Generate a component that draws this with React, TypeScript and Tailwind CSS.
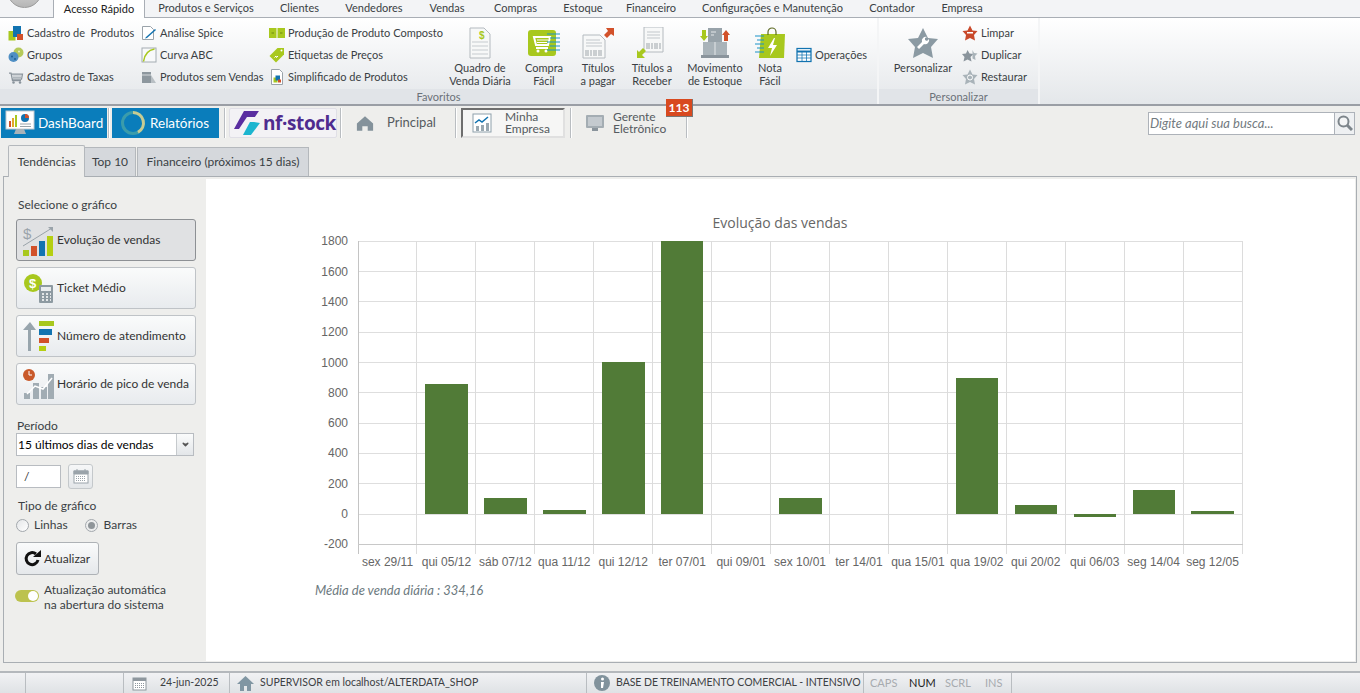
import type { ReactNode } from 'react';
import { ChevronDown } from 'lucide-react';

const menuItems: [string, number][] = [
  ['Produtos e Serviços', 122],
  ['Clientes', 65],
  ['Vendedores', 84],
  ['Vendas', 62],
  ['Compras', 75],
  ['Estoque', 60],
  ['Financeiro', 76],
  ['Configurações e Manutenção', 167],
  ['Contador', 72],
  ['Empresa', 68],
];

const bars = [
  { x: 425, w: 43, value: 858 },
  { x: 484, w: 43, value: 105 },
  { x: 543, w: 43, value: 25 },
  { x: 602, w: 43, value: 1005 },
  { x: 661, w: 42, value: 1800 },
  { x: 779, w: 43, value: 105 },
  { x: 956, w: 42, value: 900 },
  { x: 1015, w: 42, value: 60 },
  { x: 1074, w: 42, value: -20 },
  { x: 1133, w: 42, value: 160 },
  { x: 1191, w: 43, value: 20 },
];

const days = [
  'sex 29/11', 'qui 05/12', 'sáb 07/12', 'qua 11/12', 'qui 12/12',
  'ter 07/01', 'qui 09/01', 'sex 10/01', 'ter 14/01', 'qua 15/01',
  'qua 19/02', 'qui 20/02', 'qui 06/03', 'seg 14/04', 'seg 12/05',
];

const ticks = [1800, 1600, 1400, 1200, 1000, 800, 600, 400, 200, 0, -200];

const yOf = (v: number) => 514 - v * 0.1515;
const xOf = (i: number) => 358 + i * 58.93;

function Ico({ size = 16, children }: { size?: number; children: ReactNode }) {
  return (
    <svg width={size} height={size} viewBox="0 0 32 32" className="shrink-0">
      {children}
    </svg>
  );
}

const IconBoxes = () => (
  <Ico>
    <rect x="1" y="12" width="14" height="19" fill="#a8c81e" />
    <rect x="10" y="2" width="16" height="22" fill="#1273b0" />
    <rect x="18" y="18" width="12" height="12" fill="#d2512a" />
  </Ico>
);
const IconGroups = () => (
  <Ico>
    <circle cx="21" cy="11" r="10" fill="#b5c95a" />
    <circle cx="11" cy="20" r="10" fill="#4f8fc4" />
    <circle cx="8" cy="19" r="2" fill="#1d5f96" />
    <circle cx="14" cy="24" r="2" fill="#1d5f96" />
    <circle cx="22" cy="9" r="2" fill="#e8efc4" />
  </Ico>
);
const IconCart = () => (
  <Ico>
    <path d="M2 8h4l3 15h17M7 10h22l-2 10H9" fill="none" stroke="#8a949c" strokeWidth="2.5" />
    <path d="M9 14h18M9 17h18" stroke="#aeb6bc" strokeWidth="2" />
    <circle cx="11" cy="27" r="2.5" fill="#8a949c" />
    <circle cx="24" cy="27" r="2.5" fill="#8a949c" />
  </Ico>
);
const IconSpice = () => (
  <Ico>
    <path d="M3 3h16l6 6v20H3z" fill="#fff" stroke="#9aa3aa" strokeWidth="2" />
    <path d="M10 24l18-16 2 2-18 16-4 1z" fill="#1273b0" />
  </Ico>
);
const IconCurve = () => (
  <Ico>
    <rect x="2" y="2" width="28" height="28" fill="#f8f9fa" stroke="#a4acb2" strokeWidth="2" />
    <path d="M5 29C7 15 14 6 27 4" fill="none" stroke="#a8c81e" strokeWidth="3" />
  </Ico>
);
const IconNoSales = () => (
  <Ico>
    <path d="M2 6h18v22H2z" fill="#8d979e" />
    <path d="M2 12h18" stroke="#d5d9dc" strokeWidth="2" />
    <path d="M20 12l10 16H20z" fill="#b8bfc4" />
  </Ico>
);
const IconComposite = () => (
  <Ico>
    <rect x="0" y="6" width="15" height="10" fill="#a8c81e" />
    <rect x="17" y="6" width="15" height="10" fill="#a8c81e" />
    <rect x="0" y="16" width="15" height="10" fill="#a8c81e" />
    <rect x="17" y="16" width="15" height="10" fill="#a8c81e" />
    <path d="M5 16h5M22 16h5" stroke="#6f8a10" strokeWidth="2" />
  </Ico>
);
const IconTag = () => (
  <Ico>
    <path d="M1 18L17 2h13v13L14 31z" fill="#a8c81e" />
    <circle cx="25" cy="7" r="2" fill="#fff" />
    <path d="M11 21l3-3 1 3 3-3" fill="none" stroke="#fff" strokeWidth="2" />
  </Ico>
);
const IconSimple = () => (
  <Ico>
    <path d="M5 1h16l6 6v24H5z" fill="#fff" stroke="#9aa3aa" strokeWidth="2" />
    <rect x="9" y="17" width="8" height="10" fill="#a8c81e" />
    <rect x="13" y="13" width="9" height="10" fill="#1273b0" />
    <rect x="18" y="21" width="6" height="6" fill="#d2512a" />
  </Ico>
);
const IconSheet = () => (
  <Ico>
    <rect x="2" y="3" width="28" height="26" fill="#fff" stroke="#1273b0" strokeWidth="2.5" />
    <path d="M2 9h28" stroke="#1273b0" strokeWidth="4" />
    <path d="M2 16h28M2 22h28M12 9v20M21 9v20" stroke="#1273b0" strokeWidth="1.5" />
  </Ico>
);

const docLines = 'M8 15h16M8 19h16M8 23h16M8 27h16';

const BigQuadro = () => (
  <Ico size={32}>
    <path d="M6 1h14l6 6v24H6z" fill="#f7f8f8" stroke="#b4babf" strokeWidth="1" />
    <path d={docLines} stroke="#c6cbcf" strokeWidth="1" />
    <text x="15" y="12" fontSize="10" fontWeight="700" fill="#a8c81e" fontFamily="Liberation Sans, sans-serif">$</text>
  </Ico>
);
const BigCompra = () => (
  <Ico size={32}>
    <rect x="0" y="3" width="28" height="26" rx="3" fill="#a8c81e" />
    <path d="M6 10h16l-2 8H8zM8 21h12" fill="none" stroke="#fff" strokeWidth="2" />
    <path d="M9 13h11M9 15.5h10" stroke="#fff" strokeWidth="1" />
    <circle cx="10" cy="24" r="1.5" fill="#fff" />
    <circle cx="18" cy="24" r="1.5" fill="#fff" />
    <path d="M19 7h13M22 11h10M19 15h13M22 19h10M19 23h13" stroke="#1a93c8" strokeWidth="1" />
  </Ico>
);
const BigPagar = () => (
  <Ico size={32}>
    <path d="M1 8h17l5 5v18H1z" fill="#f7f8f8" stroke="#b4babf" strokeWidth="1" />
    <path d="M4 13h14M4 16h16M4 19h16" stroke="#c2c7cb" strokeWidth="1" />
    <path d="M4 23v6M6 23v6M9 23v6M12 23v6M14 23v6M17 23v6M19 23v6" stroke="#9ea5aa" strokeWidth="1" />
    <path d="M24 1h8v8l-3-2-4 4-3-3 4-4z" fill="#d2512a" />
  </Ico>
);
const BigReceber = () => (
  <Ico size={32}>
    <path d="M8 0h19v25H8z" fill="#f7f8f8" stroke="#b4babf" strokeWidth="1" />
    <path d="M11 5h13M11 8h13M11 11h13" stroke="#c2c7cb" strokeWidth="1" />
    <path d="M11 16v6M13 16v6M16 16v6M19 16v6M21 16v6M24 16v6" stroke="#9ea5aa" strokeWidth="1" />
    <path d="M1 31v-8l2 2 4-4 3 3-4 4 3 3z" fill="#a8c81e" />
  </Ico>
);
const BigMovimento = () => (
  <Ico size={32}>
    <rect x="9" y="1" width="14" height="14" fill="#98a3aa" />
    <rect x="4" y="15" width="24" height="14" fill="#a9b3b9" />
    <path d="M16 15v14M12 5h5M12 8h3" stroke="#e4e7e9" strokeWidth="1" />
    <rect x="2" y="28" width="28" height="3" fill="#8a949c" />
    <path d="M3 3h4v6h2l-4 5-4-5h2z" fill="#a8c81e" />
    <path d="M25 14V8h-2l4-5 4 5h-2v6z" fill="#d2512a" />
  </Ico>
);
const BigNota = () => (
  <Ico size={32}>
    <path d="M7 7h24l-1 24H5z" fill="#a8c81e" />
    <path d="M14 8V5a4 4 0 018 0v3" fill="none" stroke="#5d6a22" strokeWidth="1.2" />
    <path d="M20 11l-6 10h4l-2 8 7-11h-4l2-7z" fill="#fff" />
    <path d="M1 9h9M3 13h7M1 17h9M3 21h7M1 25h9" stroke="#1a93c8" strokeWidth="1" />
  </Ico>
);
const BigStar = () => (
  <Ico size={32}>
    <path d="M16 1l5 10 10 1-7 8 2 11-10-5-10 5 2-11-7-8 10-1z" fill="#8b9aa3" />
    <path d="M20 10a4 4 0 00-5 5l-5 5 2 2 5-5a4 4 0 005-5l-2 2-2-1 0-2z" fill="#fff" />
  </Ico>
);
const StarRed = () => (
  <Ico>
    <path d="M16 1l5 10 10 1-7 8 2 11-10-5-10 5 2-11-7-8 10-1z" fill="#c9492a" />
    <rect x="10" y="14" width="12" height="3" fill="#fff" />
  </Ico>
);
const StarDup = () => (
  <Ico>
    <path d="M11 6l4 7 8 1-6 6 2 9-8-4-8 4 2-9-5-6 8-1z" fill="#8a949c" />
    <path d="M21 6l3 6 7 1-5 5 1 8-6-3z" fill="#a9b3b9" />
  </Ico>
);
const StarRestore = () => (
  <Ico>
    <path d="M16 1l5 10 10 1-7 8 2 11-10-5-10 5 2-11-7-8 10-1z" fill="#a9b3b9" />
    <circle cx="16" cy="17" r="5" fill="none" stroke="#fff" strokeWidth="2" />
  </Ico>
);

const smallColumns: { width: number; items: [ReactNode, string][] }[] = [
  {
    width: 133,
    items: [
      [<IconBoxes />, 'Cadastro de\u00a0 Produtos'],
      [<IconGroups />, 'Grupos'],
      [<IconCart />, 'Cadastro de Taxas'],
    ],
  },
  {
    width: 128,
    items: [
      [<IconSpice />, 'Análise Spice'],
      [<IconCurve />, 'Curva ABC'],
      [<IconNoSales />, 'Produtos sem Vendas'],
    ],
  },
  {
    width: 177,
    items: [
      [<IconComposite />, 'Produção de Produto Composto'],
      [<IconTag />, 'Etiquetas de Preços'],
      [<IconSimple />, 'Simplificado de Produtos'],
    ],
  },
];

const bigButtons: { width: number; icon: ReactNode; lines: [string, string] }[] = [
  { width: 68, icon: <BigQuadro />, lines: ['Quadro de', 'Venda Diária'] },
  { width: 60, icon: <BigCompra />, lines: ['Compra', 'Fácil'] },
  { width: 48, icon: <BigPagar />, lines: ['Títulos', 'a pagar'] },
  { width: 60, icon: <BigReceber />, lines: ['Títulos a', 'Receber'] },
  { width: 66, icon: <BigMovimento />, lines: ['Movimento', 'de Estoque'] },
  { width: 44, icon: <BigNota />, lines: ['Nota', 'Fácil'] },
];

function SmallAction({ icon, label }: { icon: ReactNode; label: string }) {
  return (
    <div className="flex h-[22px] items-center gap-[3px] whitespace-nowrap">
      {icon}
      <span>{label}</span>
    </div>
  );
}

function Ribbon() {
  return (
    <div className="flex h-[88px] border-b-2 border-[#9a9ea5] bg-gradient-to-b from-white to-[#e4e7ea] text-[11px]">
      <div className="flex w-[877px] flex-col">
        <div className="flex h-[71px] pl-2">
          <div className="flex pt-1">
            {smallColumns.map((col) => (
              <div key={col.width} style={{ width: col.width }}>
                {col.items.map(([icon, label]) => (
                  <SmallAction key={label} icon={icon} label={label} />
                ))}
              </div>
            ))}
          </div>
          {bigButtons.map((b) => (
            <div
              key={b.lines[0]}
              style={{ width: b.width }}
              className="flex flex-col items-center whitespace-nowrap pt-[9px] leading-[13px]"
            >
              <div className="mb-[2px] h-[32px]">{b.icon}</div>
              <span>{b.lines[0]}</span>
              <span>{b.lines[1]}</span>
            </div>
          ))}
          <div className="ml-[4px] pt-[26px]">
            <SmallAction icon={<IconSheet />} label="Operações" />
          </div>
        </div>
        <div className="flex h-[15px] items-center justify-center bg-[#e1e4e8] pt-[1px] text-[#6b7178]">
          Favoritos
        </div>
      </div>
      <div className="flex w-[163px] flex-col border-x-2 border-x-[#f4f5f6]">
        <div className="flex h-[71px]">
          <div className="ml-[12px] flex w-[64px] flex-col items-center whitespace-nowrap pt-[9px] leading-[13px]">
            <div className="mb-[2px] h-[32px]">
              <BigStar />
            </div>
            <span>Personalizar</span>
          </div>
          <div className="ml-[7px] pt-1">
            <SmallAction icon={<StarRed />} label="Limpar" />
            <SmallAction icon={<StarDup />} label="Duplicar" />
            <SmallAction icon={<StarRestore />} label="Restaurar" />
          </div>
        </div>
        <div className="flex h-[15px] items-center justify-center bg-[#e1e4e8] pt-[1px] text-[#6b7178]">
          Personalizar
        </div>
      </div>
    </div>
  );
}

const Sep = () => <div className="h-[30px] w-[2px] shrink-0 border-l border-r border-l-[#b9bdc1] border-r-white" />;

function NavBar() {
  return (
    <div className="flex h-[34px] items-center pl-[1px] pr-[5px]">
      <div className="flex h-[30px] w-[106px] items-center gap-[3px] bg-[#0a7dbb] pl-[4px] text-[13.5px] text-white">
        <svg width="30" height="26" viewBox="0 0 30 26">
          <rect x="1" y="1" width="28" height="18" fill="#fff" stroke="#c5cbd0" />
          <path d="M11 19h8l2 5H9z" fill="#a9b3b9" />
          <rect x="4" y="11" width="2" height="6" fill="#d2512a" />
          <rect x="7" y="8" width="2" height="9" fill="#e2a72a" />
          <rect x="10" y="5" width="2" height="12" fill="#a8c81e" />
          <circle cx="20" cy="8" r="4" fill="#1273b0" />
          <path d="M20 8V4a4 4 0 014 4z" fill="#d2512a" />
          <path d="M15 14h11M15 16.5h11" stroke="#9aa3aa" />
        </svg>
        DashBoard
      </div>
      <div className="mx-[1px]"><Sep /></div>
      <div className="ml-[1px] flex h-[30px] w-[107px] items-center gap-[4px] bg-[#0a7dbb] pl-[8px] text-[13.5px] text-white">
        <svg width="26" height="26" viewBox="0 0 26 26">
          <circle cx="13" cy="13" r="10.500" fill="none" stroke="#3b9cab" strokeWidth="3" />
          <path d="M13 2.500a10.500 10.500 0 015 19.700" fill="none" stroke="#c7cb93" strokeWidth="3" />
        </svg>
        Relatórios
      </div>
      <div className="ml-[5px]"><Sep /></div>
      <div className="ml-[3px] flex h-[30px] w-[108px] items-center gap-[2px] rounded-[2px] border border-[#e0dfe6] bg-[#f3f2f5] pl-[3px] font-['Open_Sans',sans-serif] text-[19px] font-bold leading-none tracking-[-0.4px] text-[#4f2c8f]">
        <svg width="28" height="26" viewBox="0 0 28 26">
          <path d="M1 19L11 1h15l-4 6h-8L6 19z" fill="#5a2ea0" />
          <path d="M10 25l7-13h4l6 1-9 12z" fill="#1cb5cf" />
        </svg>
        <span>nf·stock</span>
      </div>
      <div className="ml-[3px]"><Sep /></div>
      <div className="flex w-[113px] items-center pl-[14px] text-[13px] text-[#555b60]">
        <svg width="18" height="17" viewBox="0 0 20 18" className="mr-[13px]">
          <path d="M10 1L1 9v8h6v-5h6v5h6V9z" fill="#84929b" />
        </svg>
        Principal
      </div>
      <Sep />
      <div className="ml-[4px] flex h-[30px] w-[104px] items-center border-2 border-[#e0e0e0] border-l-[#6e6e6e] border-t-[#6e6e6e] bg-[#f6f6f5] pl-[9px] text-[#555b60]">
        <svg width="20" height="20" viewBox="0 0 20 20" className="mr-[13px] shrink-0">
          <rect x="1" y="1" width="18" height="18" fill="#fff" stroke="#8ea0ab" />
          <path d="M3 10l4-3 3 2 6-5" fill="none" stroke="#1273b0" strokeWidth="1.5" />
          <path d="M4 13h3v5H4zM9 12h3v6H9zM14 10h3v8h-3z" fill="#9aa8b0" />
        </svg>
        <div className="text-[12px] leading-[12px]">
          <div>Minha</div>
          <div>Empresa</div>
        </div>
      </div>
      <div className="ml-[5px]"><Sep /></div>
      <div className="relative flex h-[30px] w-[114px] items-center pl-[13px] text-[#555b60]">
        <svg width="20" height="18" viewBox="0 0 20 18" className="mr-[8px] shrink-0">
          <rect x="1" y="1" width="18" height="13" rx="1" fill="#a4adb3" />
          <rect x="3" y="3" width="14" height="9" fill="#c4cacf" />
          <path d="M7 14h6v3H7z" fill="#8a949c" />
        </svg>
        <div className="text-[12px] leading-[12px]">
          <div>Gerente</div>
          <div>Eletrônico</div>
        </div>
        <div className="absolute left-[94px] top-[-9px] flex h-[18px] w-[27px] items-center justify-center border border-[#777] border-l-0 border-t-0 bg-[#d8491f] text-[12px] font-bold text-white">
          113
        </div>
      </div>
      <Sep />
      <div className="ml-auto flex h-[23px] w-[207px] border border-[#adb2b9] bg-white">
        <span className="flex-1 pl-[1px] text-[13px] italic leading-[21px] text-[#727a80]">
          Digite aqui sua busca...
        </span>
        <div className="flex w-[20px] items-center justify-center border-l border-[#adb2b9] bg-[#eef0f2]">
          <svg width="16" height="16" viewBox="0 0 16 16">
            <circle cx="6.500" cy="6.500" r="5" fill="#f4f5f6" stroke="#7d858b" strokeWidth="2" />
            <path d="M10 10l5 5" stroke="#7d858b" strokeWidth="3" />
          </svg>
        </div>
      </div>
    </div>
  );
}

function ChartButton({ icon, label, active }: { icon: ReactNode; label: string; active?: boolean }) {
  return (
    <button
      className={
        active
          ? 'flex h-[42px] w-[180px] items-center gap-[2px] rounded-[3px] border border-[#8d9094] bg-[#e0e1e3] pl-[5px] text-[#333]'
          : 'flex h-[42px] w-[180px] items-center gap-[2px] rounded-[3px] border border-[#bfc3c7] bg-gradient-to-b from-[#fafbfb] to-[#e8ebee] pl-[5px] text-[#333]'
      }
    >
      {icon}
      <span className="whitespace-nowrap">{label}</span>
    </button>
  );
}

function Sidebar() {
  return (
    <div className="w-[202px] shrink-0 pl-[12px] pt-[18px]">
      <div className="ml-[2px] h-[16px] leading-[16px]">Selecione o gráfico</div>
      <div className="mt-[6px] flex flex-col gap-[6px]">
        <ChartButton
          active
          label="Evolução de vendas"
          icon={
            <svg width="33" height="32" viewBox="0 0 33 32">
              <text x="1" y="15" fontSize="15" fill="#9aa3aa" fontFamily="Liberation Sans, sans-serif">$</text>
              <path d="M1 22L30 4" stroke="#9aa3aa" strokeWidth="1" />
              <path d="M26 3h5v5z" fill="#9aa3aa" />
              <rect x="1" y="26" width="6" height="6" fill="#a8c81e" />
              <rect x="9" y="22" width="6" height="10" fill="#d2512a" />
              <rect x="17" y="17" width="6" height="15" fill="#1273b0" />
              <rect x="25" y="12" width="6" height="20" fill="#b5cf12" />
            </svg>
          }
        />
        <ChartButton
          label="Ticket Médio"
          icon={
            <svg width="33" height="32" viewBox="0 0 33 32">
              <circle cx="11" cy="11" r="9" fill="#a8c81e" />
              <text x="7" y="16" fontSize="13" fontWeight="700" fill="#fff" fontFamily="Liberation Sans, sans-serif">$</text>
              <rect x="17" y="13" width="14" height="18" rx="1" fill="#8d9aa2" />
              <rect x="19" y="15" width="10" height="4" fill="#e9ecee" />
              <path d="M20 22h2M24 22h2M28 22h1M20 25h2M24 25h2M28 25h1M20 28h2M24 28h2M28 28h1" stroke="#fff" strokeWidth="1.5" />
            </svg>
          }
        />
        <ChartButton
          label="Número de atendimento"
          icon={
            <svg width="33" height="32" viewBox="0 0 33 32">
              <path d="M6 31V10H1l7-8 6 8h-5v21z" fill="#98a5ad" />
              <rect x="17" y="1" width="15" height="5" fill="#a8c81e" />
              <rect x="17" y="9" width="13" height="6" fill="#1273b0" />
              <rect x="17" y="18" width="10" height="5" fill="#d2512a" />
              <rect x="17" y="26" width="7" height="5" fill="#b5cf12" />
            </svg>
          }
        />
        <ChartButton
          label="Horário de pico de venda"
          icon={
            <svg width="33" height="32" viewBox="0 0 33 32">
              <rect x="2" y="25" width="6" height="6" fill="#a1acb3" />
              <rect x="11" y="15" width="6" height="16" fill="#a1acb3" />
              <rect x="19" y="19" width="6" height="12" fill="#a1acb3" />
              <rect x="26" y="6" width="6" height="25" fill="#a1acb3" />
              <path d="M5 26l8-8 8 3 9-11" fill="none" stroke="#fff" strokeWidth="1.5" />
              <circle cx="7" cy="7" r="6" fill="#c9592a" />
              <path d="M7 3v4h3" fill="none" stroke="#fff" />
            </svg>
          }
        />
      </div>
      <div className="ml-[1px] mt-[14px] h-[14px] leading-[14px]">Período</div>
      <div className="flex h-[23px] w-[178px] border border-[#b8bcc1] bg-white">
        <span className="flex-1 pl-[1px] leading-[21px] text-black">15 últimos dias de vendas</span>
        <div className="flex w-[17px] items-center justify-center border-l border-[#c6cacd] bg-gradient-to-b from-[#fafbfb] to-[#e3e6e9]">
          <ChevronDown size={9} strokeWidth={4} fill="#555" className="text-[#555]" />
        </div>
      </div>
      <div className="mt-[8px] flex items-center gap-[7px]">
        <div className="h-[23px] w-[45px] border border-[#b8bcc1] bg-white pl-[7px] leading-[21px] text-[#333]">/</div>
        <div className="flex h-[25px] w-[25px] items-center justify-center rounded-[3px] border border-[#c4c8cb] bg-gradient-to-b from-[#f6f7f8] to-[#e3e6e9]">
          <svg width="16" height="15" viewBox="0 0 16 15">
            <rect x="1" y="2" width="14" height="12" fill="#fff" stroke="#9aa3aa" />
            <path d="M1 2h14v3H1zM4 0v3M12 0v3" stroke="#9aa3aa" fill="#9aa3aa" />
            <path d="M3 7.500h10M3 9.500h10M3 11.500h10" stroke="#9aa3aa" strokeDasharray="1 1" />
          </svg>
        </div>
      </div>
      <div className="ml-[2px] mt-[9px] h-[16px] leading-[16px]">Tipo de gráfico</div>
      <div className="mt-[2px] flex h-[18px] items-center">
        <div className="h-[13px] w-[13px] rounded-full border border-[#a3a8ad] bg-gradient-to-br from-[#e4e6e8] to-white" />
        <span className="ml-[5px]">Linhas</span>
        <div className="ml-[17px] flex h-[13px] w-[13px] items-center justify-center rounded-full border border-[#a3a8ad] bg-[#eceded]">
          <div className="h-[7px] w-[7px] rounded-full bg-[#8f9599]" />
        </div>
        <span className="ml-[6px]">Barras</span>
      </div>
      <button className="mt-[8px] flex h-[33px] w-[83px] items-center gap-[3px] rounded-[3px] border border-[#aeb2b6] bg-gradient-to-b from-[#fafbfb] to-[#e5e8eb] pl-[6px] text-[#333]">
        <svg width="18" height="18" viewBox="0 0 18 18">
          <path d="M15 10a6 6 0 11-2-6" fill="none" stroke="#111" strokeWidth="3" />
          <path d="M10 7h8V0z" fill="#111" />
        </svg>
        Atualizar
      </button>
      <div className="-ml-px mt-[7px] flex">
        <div className="mt-[8px] flex h-[12px] w-[24px] shrink-0 items-center justify-end rounded-full bg-[#bcc24e] pr-[1px]">
          <div className="h-[10px] w-[10px] rounded-full bg-white" />
        </div>
        <div className="ml-[5px] leading-[15px]">
          <div>Atualização automática</div>
          <div>na abertura do sistema</div>
        </div>
      </div>
    </div>
  );
}

function Chart() {
  const font = 'Liberation Sans, Arial, sans-serif';
  return (
    <svg width="1149" height="399" viewBox="206 179 1149 399" className="block">
      <text x="780" y="228" textAnchor="middle" fontSize="14" fill="#666" fontFamily="Open Sans, sans-serif">
        Evolução das vendas
      </text>
      {ticks.map((t) => (
        <g key={t}>
          <line x1="358" x2="1243" y1={Math.floor(yOf(t)) + 0.5} y2={Math.floor(yOf(t)) + 0.5} stroke="#dedede" />
          <text x="348" y={yOf(t) + 4} textAnchor="end" fontSize="12" fill="#666" fontFamily={font}>
            {t}
          </text>
        </g>
      ))}
      {days.map((d, i) => (
        <g key={d}>
          <line
            x1={Math.floor(xOf(i)) + 0.5}
            x2={Math.floor(xOf(i)) + 0.5}
            y1="241"
            y2="554"
            stroke={i === 0 ? '#c4c4c4' : '#dcdcdc'}
          />
          <text x={xOf(i) + 29.500} y="566" textAnchor="middle" fontSize="12" fill="#666" fontFamily={font}>
            {d}
          </text>
        </g>
      ))}
      <line x1="1242.500" x2="1242.500" y1="241" y2="554" stroke="#dcdcdc" />
      <line x1="358" x2="1243" y1="544.500" y2="544.500" stroke="#c8c8c8" />
      {bars.map((b) => {
        const top = Math.round(yOf(Math.max(b.value, 0)));
        const bottom = Math.round(yOf(Math.min(b.value, 0)));
        return (
          <rect
            key={b.x}
            x={b.x}
            y={top}
            width={b.w}
            height={bottom - top}
            fill="#517b37"
          />
        );
      })}
    </svg>
  );
}

function StatusBar() {
  const cell = 'flex h-full shrink-0 items-center border-r border-r-[#b9bdc1]';
  return (
    <div className="mt-auto flex h-[22px] border-t-2 border-t-[#b4b8bc] bg-gradient-to-b from-[#f1f2f4] to-[#dfe2e5] text-[10.5px] text-[#3c4043]">
      <div className={`${cell} w-[26px]`} />
      <div className={`${cell} w-[98px]`} />
      <div className={`${cell} w-[106px] pl-[8px]`}>
        <svg width="15" height="15" viewBox="0 0 15 15" className="mr-[13px] shrink-0">
          <rect x="1" y="2" width="13" height="12" fill="#fff" stroke="#8e979e" />
          <path d="M1 2h13v3H1z" fill="#8e979e" />
          <path d="M3 7.500h9M3 9.500h9M3 11.500h9" stroke="#8e979e" strokeDasharray="1 1" />
        </svg>
        24-jun-2025
      </div>
      <div className={`${cell} w-[357px] pl-[7px]`}>
        <svg width="17" height="15" viewBox="0 0 17 15" className="mr-[6px] shrink-0">
          <path d="M8.500 0L0 8h3v7h4v-5h3v5h4V8h3z" fill="#8096a3" />
        </svg>
        SUPERVISOR em localhost/ALTERDATA_SHOP
      </div>
      <div className={`${cell} w-[277px] pl-[7px]`}>
        <svg width="16" height="16" viewBox="0 0 16 16" className="mr-[6px] shrink-0">
          <circle cx="8" cy="8" r="8" fill="#81929c" />
          <circle cx="8.500" cy="4" r="1.500" fill="#fff" />
          <path d="M7 7h3l-1 6H7z" fill="#fff" />
        </svg>
        <span className="whitespace-nowrap tracking-[-0.05px]">BASE DE TREINAMENTO COMERCIAL - INTENSIVO</span>
      </div>
      <div className={`${cell} w-[148px] pl-[6px] text-[11px]`}>
        <span className="w-[39px] text-[#a7abaf]">CAPS</span>
        <span className="w-[36px] text-[#222]">NUM</span>
        <span className="w-[40px] text-[#a7abaf]">SCRL</span>
        <span className="text-[#a7abaf]">INS</span>
      </div>
    </div>
  );
}

export default function App() {
  return (
    <div className="flex h-[693px] w-[1360px] flex-col overflow-hidden bg-[#eeeeec] font-['Lato',sans-serif] text-[12px] text-[#3a3f44]">
      <div className="relative flex h-[18px] border-b border-[#a9aeb5] bg-[#f3f4f6] pl-[53px] text-[11px]">
        <div className="absolute left-[7px] top-[-27px] h-[35px] w-[35px] rounded-full border border-[#9a9a9a] bg-gradient-to-b from-[#f2f2f2] to-[#b5b5b5]" />
        <div className="z-10 flex h-[18px] w-[92px] items-center justify-center border-x border-[#a9aeb5] bg-white text-[#222]">
          Acesso Rápido
        </div>
        {menuItems.map(([name, width]) => (
          <div key={name} style={{ width }} className="flex items-center justify-center whitespace-nowrap">
            {name}
          </div>
        ))}
      </div>
      <Ribbon />
      <NavBar />
      <div className="mt-[5px] flex h-[31px] items-end pl-[8px]">
        <div className="z-10 -mb-px flex h-[32px] w-[77px] items-center justify-center rounded-t-[2px] border border-b-0 border-[#b4b8bc] bg-[#eeeeec]">
          Tendências
        </div>
        <div className="flex h-[29px] w-[51px] items-center justify-center border border-b-0 border-l-0 border-[#b4b8bc] bg-[#d5d8dc]">
          Top 10
        </div>
        <div className="ml-[1px] flex h-[29px] w-[172px] items-center justify-center border border-b-0 border-[#b4b8bc] bg-[#d5d8dc]">
          Financeiro (próximos 15 dias)
        </div>
      </div>
      <div className="mx-[3px] flex h-[487px] border border-[#a9aeb3] pb-[1px] pr-[1px] pt-[2px]">
        <Sidebar />
        <div className="flex-1 bg-white">
          <Chart />
          <div className="ml-[109px] mt-[3px] text-[13px] italic text-[#6d7a80]">Média de venda diária : 334,16</div>
        </div>
      </div>
      <StatusBar />
    </div>
  );
}
